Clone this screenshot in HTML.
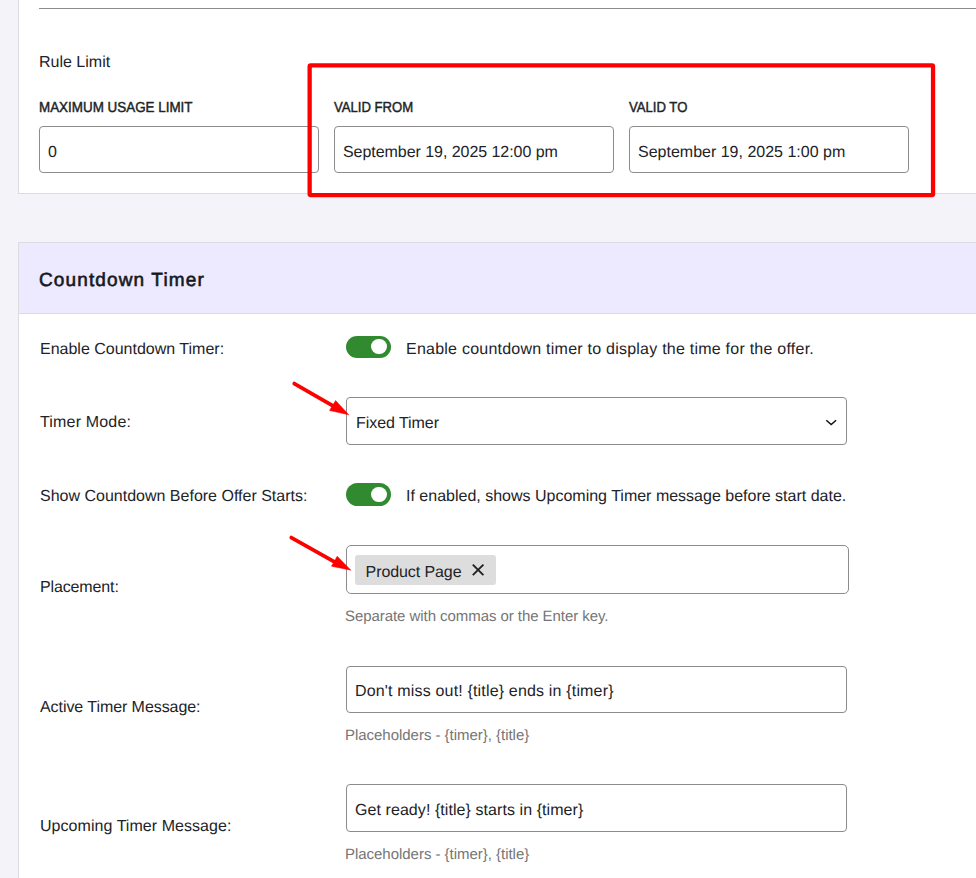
<!DOCTYPE html>
<html><head><meta charset="utf-8">
<style>
html,body{margin:0;padding:0;}
body{text-rendering:geometricPrecision;width:976px;height:878px;overflow:hidden;background:#f3f3f9;position:relative;font-family:"Liberation Sans",sans-serif;color:#1d2327;}
.abs{position:absolute;}
.t{position:absolute;white-space:nowrap;line-height:20px;font-size:16px;font-weight:400;}
.card1{position:absolute;left:18px;top:-2px;width:980px;height:195px;background:#fff;border-left:1px solid #dcdcde;border-bottom:1px solid #dcdcde;}
.card2{position:absolute;left:18px;top:242px;width:980px;height:700px;background:#fff;border-left:1px solid #dcdcde;border-top:1px solid #dcdcde;}
.hdr{position:absolute;left:19px;top:243px;width:960px;height:70px;background:#ede9fe;border-bottom:1px solid #dcdcde;}
.inp{position:absolute;box-sizing:border-box;border:1px solid #8c8c8c;border-radius:4px;background:#fff;}
.lbl{font-weight:400;font-size:14.5px;-webkit-text-stroke:0.45px #1d2327;}
.gray{color:#757575;}
.tog{position:absolute;width:45px;height:22px;border-radius:11px;background:#318a30;}
.tog::after{content:"";position:absolute;left:25.3px;top:3px;width:15.4px;height:15.4px;border-radius:50%;background:#fff;}
.t2::after{top:3.8px;}
</style></head><body>
<div class="card1"></div>
<div class="abs" style="left:39px;top:8px;width:940px;height:1px;background:#8c8c8c"></div>
<div class="t" style="left:39px;top:53px;">Rule Limit</div>
<div class="t lbl" style="left:39px;top:98px;transform:scaleX(0.925);transform-origin:0 0">MAXIMUM USAGE LIMIT</div>
<div class="t lbl" style="left:334px;top:98px;transform:scaleX(0.905);transform-origin:0 0">VALID FROM</div>
<div class="t lbl" style="left:629px;top:98px;transform:scaleX(0.905);transform-origin:0 0">VALID TO</div>
<div class="inp" style="left:39px;top:126px;width:280px;height:47px"></div>
<div class="inp" style="left:334px;top:126px;width:280px;height:47px"></div>
<div class="inp" style="left:629px;top:126px;width:280px;height:47px"></div>
<div class="t" style="left:48px;top:143px;">0</div>
<div class="t" style="left:343px;top:143px;letter-spacing:-0.05px">September 19, 2025 12:00 pm</div>
<div class="t" style="left:638px;top:143px;">September 19, 2025 1:00 pm</div>
<svg class="abs" style="left:0;top:0" width="976" height="878">
<rect x="309.65" y="65.35" width="623.4" height="129.7" rx="1" fill="none" stroke="#ff0000" stroke-width="4.3"/>
</svg>

<div class="card2"></div>
<div class="hdr"></div>
<div class="t" style="left:39px;top:271px;font-size:19px;font-weight:400;letter-spacing:1.13px;color:#151a1e;-webkit-text-stroke:0.6px #151a1e">Countdown Timer</div>

<div class="t" style="left:40px;top:340px;">Enable Countdown Timer:</div>
<div class="tog" style="left:346px;top:336px"></div>
<div class="t" style="left:406px;top:340px;letter-spacing:0.235px">Enable countdown timer to display the time for the offer.</div>

<div class="t" style="left:40px;top:413px;letter-spacing:0.17px">Timer Mode:</div>
<div class="inp" style="left:346px;top:397px;width:501px;height:48px"></div>
<div class="t" style="left:356px;top:414px;letter-spacing:-0.06px">Fixed Timer</div>

<div class="t" style="left:40px;top:487px;">Show Countdown Before Offer Starts:</div>
<div class="tog t2" style="left:346px;top:483px;height:23px;border-radius:11.5px"></div>
<div class="t" style="left:406px;top:487px;">If enabled, shows Upcoming Timer message before start date.</div>

<div class="t" style="left:40px;top:578px;letter-spacing:-0.13px">Placement:</div>
<div class="inp" style="left:346px;top:545px;width:503px;height:49px;border-radius:5px"></div>
<div class="abs" style="left:355px;top:555px;width:141px;height:30px;background:#dddddd;border-radius:3px"></div>
<div class="t" style="left:365.6px;top:563px;letter-spacing:-0.09px">Product Page</div>
<div class="t gray" style="left:345px;top:607px;font-size:15px;letter-spacing:-0.06px">Separate with commas or the Enter key.</div>

<div class="t" style="left:40px;top:698px;letter-spacing:-0.065px">Active Timer Message:</div>
<div class="inp" style="left:346px;top:666px;width:501px;height:47px"></div>
<div class="t" style="left:355px;top:682px;letter-spacing:0.17px">Don't miss out! {title} ends in {timer}</div>
<div class="t gray" style="left:345px;top:726px;font-size:15px;letter-spacing:-0.03px">Placeholders - {timer}, {title}</div>

<div class="t" style="left:40px;top:817px;letter-spacing:0.05px">Upcoming Timer Message:</div>
<div class="inp" style="left:346px;top:784px;width:501px;height:48px"></div>
<div class="t" style="left:355px;top:801px;letter-spacing:0.07px">Get ready! {title} starts in {timer}</div>
<div class="t gray" style="left:345px;top:845px;font-size:15px;letter-spacing:-0.03px">Placeholders - {timer}, {title}</div>

<svg class="abs" style="left:0;top:0" width="976" height="878">
<g fill="none" stroke="#111" stroke-width="1.5"><path d="M826.3 420.3 L831.2 424.6 L836.1 420.3"/></g>
<g stroke="#222" stroke-width="1.9"><path d="M472.8 564.6 L483.4 575.2 M483.4 564.6 L472.8 575.2"/></g>
<g fill="#ff0000" stroke="#ff0000">
<path d="M294.3 383.6 L333 405.8" stroke-width="3.8" stroke-linecap="round"/>
<path d="M348.8 414.8 L335.6 400.5 L329.5 410.5 Z" stroke-width="0.5" stroke-linejoin="round"/>
<path d="M291.3 537.6 L333.6 561.3" stroke-width="3.8" stroke-linecap="round"/>
<path d="M350.9 570.2 L337.2 556.2 L331.5 566.2 Z" stroke-width="0.5" stroke-linejoin="round"/>
</g>
</svg>
</body></html>
